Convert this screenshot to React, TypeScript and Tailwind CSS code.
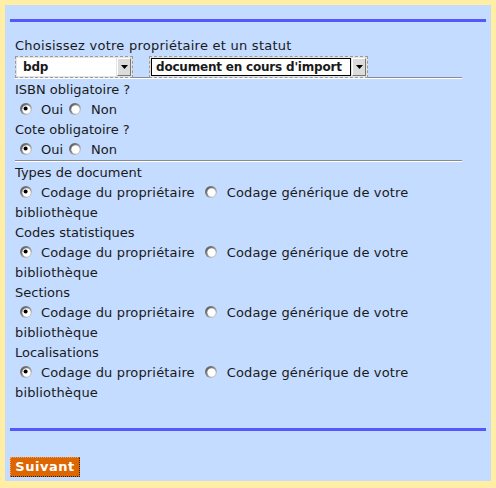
import React from "react";

const Radio = ({ checked, className = "" }: { checked?: boolean; className?: string }) => (
  <svg width="12" height="12" viewBox="0 0 12 12" className={`inline-block align-[-1px] ${className}`}>
    <defs>
      <linearGradient id="ring" x1="0" y1="0" x2="1" y2="1">
        <stop offset="0" stopColor="#4a4a4a" />
        <stop offset="0.5" stopColor="#8e8e8e" />
        <stop offset="1" stopColor="#e6e6e6" />
      </linearGradient>
    </defs>
    <circle cx="6" cy="6" r="6" fill="url(#ring)" />
    <circle cx="6.5" cy="6.5" r="4.2" fill="#ffffff" />
    {checked && <circle cx="5.6" cy="5.6" r="2" fill="#000000" />}
  </svg>
);

const Hr = () => (
  <div className="h-[2px] border-t border-b border-t-[#8a8a8a] border-b-white" />
);

const Select = ({ label, width, focused }: { label: string; width: string; focused?: boolean }) => (
  <div className={`${width} h-[22px] flex items-center border border-dashed border-[#9a9a9a] bg-[#e4e4e4] px-[1px]`}>
    <div
      className={`flex-1 h-[18px] bg-white flex items-center font-bold text-[12px] tracking-[-0.2px] whitespace-nowrap overflow-hidden ${
        focused ? "border border-black pl-[4px]" : "pl-[6px]"
      }`}
    >
      {label}
    </div>
    <div className="w-[14px] h-[18px] ml-[1px] bg-[#dcdcdc] border border-t-white border-l-white border-b-[#777] border-r-[#777] flex items-center justify-center">
      <svg width="7" height="4" viewBox="0 0 7 4">
        <polygon points="0,0 7,0 3.5,4" fill="#000" />
      </svg>
    </div>
  </div>
);

const Line = ({ children }: { children: React.ReactNode }) => (
  <div className="h-[20px] leading-[20px] whitespace-nowrap">{children}</div>
);

const YesNo = () => (
  <Line>
    <Radio checked className="ml-[5px] mr-[9px]" />
    Oui
    <Radio className="ml-[6px] mr-[10px]" />
    Non
  </Line>
);

const Choice = () => (
  <div className="leading-[20px] tracking-[0.15px]">
    <Radio checked className="ml-[5px] mr-[9px]" />
    Codage du propriétaire
    <Radio className="ml-[10px] mr-[10px]" />
    Codage générique de votre bibliothèque
  </div>
);

const sections = ["Types de document", "Codes statistiques", "Sections", "Localisations"];

export default function App() {
  return (
    <div className="w-[496px] h-[488px] bg-[#ffeea4] pt-[5px] pl-[5px]">
      <div
        className="w-[486px] h-[476px] bg-[#c4dcff] p-[5px] text-[13px] text-[#1a1a1a]"
        style={{ fontFamily: '"DejaVu Sans", Verdana, sans-serif' }}
      >
        <div className="mt-[9px] h-[3px] w-[476px] bg-[#5757ff]" />
        <div className="w-[447px] ml-[5px] mt-[14px]">
          <Line>
            <span className="tracking-[0.25px]">Choisissez votre propriétaire et un statut</span>
          </Line>
          <div className="flex gap-[16px] -mb-[1px]">
            <Select label="bdp" width="w-[118px]" />
            <Select label="document en cours d'import" width="w-[219px]" focused />
          </div>
          <Hr />
          <div className="mt-[1px]">
            <Line>ISBN obligatoire ?</Line>
            <YesNo />
            <Line>Cote obligatoire ?</Line>
            <YesNo />
          </div>
          <Hr />
          <div className="mt-[1px]">
            {sections.map((s) => (
              <div key={s}>
                <Line>{s}</Line>
                <Choice />
              </div>
            ))}
          </div>
        </div>
        <div className="mt-[25px] h-[3px] w-[476px] bg-[#5757ff]" />
        <button className="mt-[26px] h-[20px] w-[70px] bg-[#dd6600] text-white font-bold text-[13px] tracking-[0.5px] border border-dotted border-t-[#f3a15a] border-l-[#f3a15a] border-b-[#222] border-r-[#222] leading-[18px]">
          Suivant
        </button>
      </div>
    </div>
  );
}
